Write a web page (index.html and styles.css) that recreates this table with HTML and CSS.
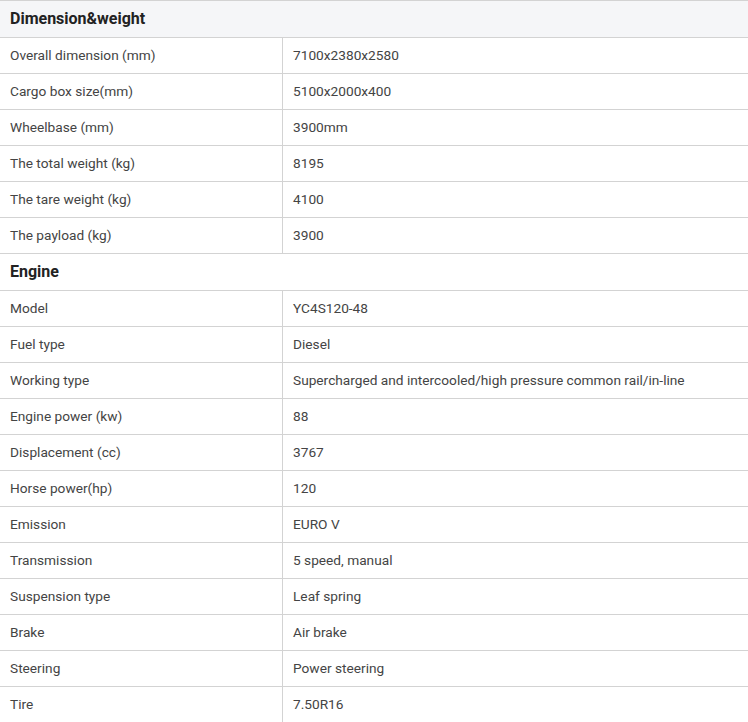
FILE: index.html
```html
<!DOCTYPE html>
<html>
<head>
<meta charset="utf-8">
<link rel="stylesheet" href="styles.css">
</head>
<body>
<div class="spec">
  <div class="row head shaded"><div class="cell full">Dimension&amp;weight</div></div>
  <div class="row"><div class="cell key">Overall dimension (mm)</div><div class="cell val">7100x2380x2580</div></div>
  <div class="row"><div class="cell key">Cargo box size(mm)</div><div class="cell val">5100x2000x400</div></div>
  <div class="row"><div class="cell key">Wheelbase (mm)</div><div class="cell val">3900mm</div></div>
  <div class="row"><div class="cell key">The total weight (kg)</div><div class="cell val">8195</div></div>
  <div class="row"><div class="cell key">The tare weight (kg)</div><div class="cell val">4100</div></div>
  <div class="row"><div class="cell key">The payload (kg)</div><div class="cell val">3900</div></div>
  <div class="row head"><div class="cell full">Engine</div></div>
  <div class="row"><div class="cell key">Model</div><div class="cell val">YC4S120-48</div></div>
  <div class="row"><div class="cell key">Fuel type</div><div class="cell val">Diesel</div></div>
  <div class="row"><div class="cell key">Working type</div><div class="cell val">Supercharged and intercooled/high pressure common rail/in-line</div></div>
  <div class="row"><div class="cell key">Engine power (kw)</div><div class="cell val">88</div></div>
  <div class="row"><div class="cell key">Displacement (cc)</div><div class="cell val">3767</div></div>
  <div class="row"><div class="cell key">Horse power(hp)</div><div class="cell val">120</div></div>
  <div class="row"><div class="cell key">Emission</div><div class="cell val">EURO V</div></div>
  <div class="row"><div class="cell key">Transmission</div><div class="cell val">5 speed, manual</div></div>
  <div class="row"><div class="cell key">Suspension type</div><div class="cell val">Leaf spring</div></div>
  <div class="row"><div class="cell key">Brake</div><div class="cell val">Air brake</div></div>
  <div class="row"><div class="cell key">Steering</div><div class="cell val">Power steering</div></div>
  <div class="row"><div class="cell key">Tire</div><div class="cell val">7.50R16</div></div>
</div>
</body>
</html>
```
FILE: styles.css
```css
html, body {
  margin: 0;
  padding: 0;
  background: #fff;
}
.spec {
  width: 748px;
  font-family: Roboto, "Liberation Sans", sans-serif;
  font-size: 13.7px;
  color: #444;
}
.row {
  display: flex;
  border-top: 1px solid #d3d3d3;
  height: 35px;
}
.row.head {
  height: 36px;
}
.row.shaded {
  background: #f5f6f8;
}
.cell {
  display: flex;
  align-items: center;
  padding-left: 10px;
  padding-bottom: 2px;
  box-sizing: border-box;
}
.key {
  width: 283px;
  border-right: 1px solid #d3d3d3;
}
.val {
  flex: 1;
}
.full {
  flex: 1;
  font-weight: bold;
  font-size: 16px;
  color: #222;
}
```
